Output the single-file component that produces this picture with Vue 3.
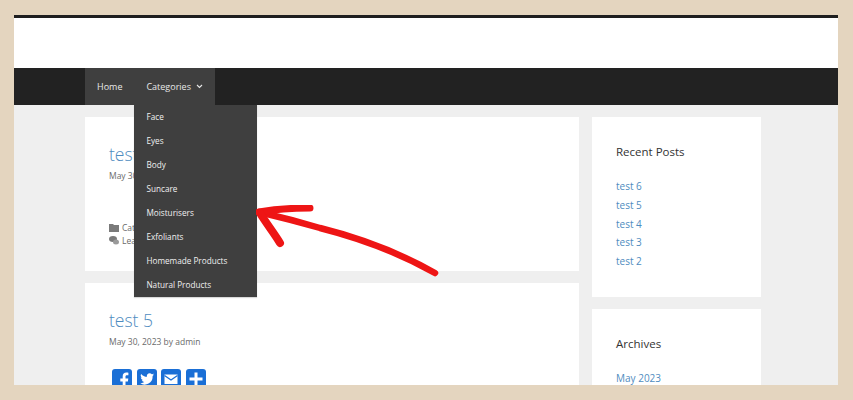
<template>
  <div class="frame">
    <div class="top-line"></div>
    <header class="header"></header>

    <nav class="nav">
      <ul class="menu">
        <li class="item">Home</li>
        <li class="item has-sub">
          Categories
          <svg class="caret" width="7" height="5" viewBox="0 0 7 5">
            <path d="M1 1l2.5 2.5L6 1" fill="none" stroke="#e8e8e8" stroke-width="1.1" />
          </svg>
          <ul class="dropdown">
            <li v-for="c in categorias" :key="c">{{ c }}</li>
          </ul>
        </li>
      </ul>
    </nav>

    <div class="content">
      <main class="posts">
        <article class="card first">
          <h2 class="title">test 6</h2>
          <p class="meta">May 30, 2023 by admin</p>
          <div class="foot">
            <div class="foot-row">
              <svg width="10" height="8" viewBox="0 0 10 8"><path d="M0 0h4l1 1h5v7H0z" fill="#7a7a7a" /></svg>
              Categories
            </div>
            <div class="foot-row">
              <svg width="10" height="9" viewBox="0 0 10 9"><ellipse cx="4" cy="3" rx="4" ry="3" fill="#7a7a7a" /><ellipse cx="7" cy="6" rx="3" ry="2.5" fill="#9a9a9a" /></svg>
              Leave a comment
            </div>
          </div>
        </article>

        <article class="card second">
          <h2 class="title">test 5</h2>
          <p class="meta">May 30, 2023 by admin</p>
          <div class="share">
            <span class="ico">
              <svg viewBox="0 0 20 20"><path d="M13.5 20v-7.6h2.4l.4-2.9h-2.8V7.7c0-.8.3-1.4 1.5-1.4h1.4V3.7c-.3 0-1.1-.1-2.1-.1-2.1 0-3.6 1.3-3.6 3.7v2.2H8.3v2.9h2.4V20z" fill="#fff" /></svg>
            </span>
            <span class="ico">
              <svg viewBox="0 0 20 20"><path d="M17 5.6c-.5.2-1 .4-1.6.5.6-.4 1-.9 1.2-1.6-.5.3-1.1.6-1.8.7a2.8 2.8 0 0 0-4.8 2.6C7.7 7.7 5.6 6.6 4.2 4.9a2.8 2.8 0 0 0 .9 3.8c-.5 0-.9-.1-1.3-.4 0 1.4 1 2.5 2.3 2.8-.4.1-.8.1-1.3 0 .4 1.1 1.4 1.9 2.6 2-1.2.9-2.7 1.3-4.2 1.1a8 8 0 0 0 12.4-7.1c.6-.4 1-.9 1.4-1.5z" fill="#fff" /></svg>
            </span>
            <span class="ico">
              <svg viewBox="0 0 20 20"><path d="M3.5 5.5h13v9.5h-13z" fill="#fff" /><path d="M3.5 6.5L10 11l6.5-4.5" fill="none" stroke="#1a6fd6" stroke-width="1.3" /></svg>
            </span>
            <span class="ico">
              <svg viewBox="0 0 20 20"><path d="M8.5 3.5h3v5h5v3h-5v5h-3v-5h-5v-3h5z" fill="#fff" /></svg>
            </span>
          </div>
        </article>
      </main>

      <aside class="sidebar">
        <section class="widget">
          <h3>Recent Posts</h3>
          <ul>
            <li v-for="p in recentes" :key="p">{{ p }}</li>
          </ul>
        </section>
        <section class="widget">
          <h3>Archives</h3>
          <ul>
            <li>May 2023</li>
          </ul>
        </section>
      </aside>
    </div>

    <!-- seta vermelha por cima da pagina -->
    <svg class="arrow" width="200" height="90" viewBox="0 0 200 90">
      <path d="M179 68C140 46 100 32 64 23 40 16 20 11 3 7" fill="none" stroke="#ee1515" stroke-width="6.5" stroke-linecap="round" />
      <path d="M3 7C20 4 38 3 54 3" fill="none" stroke="#ee1515" stroke-width="7" stroke-linecap="round" />
      <path d="M4 8C10 18 18 28 24 38" fill="none" stroke="#ee1515" stroke-width="8" stroke-linecap="round" />
    </svg>
  </div>
</template>

<script setup>
const categorias = [
  'Face',
  'Eyes',
  'Body',
  'Suncare',
  'Moisturisers',
  'Exfoliants',
  'Homemade Products',
  'Natural Products'
]

const recentes = ['test 6', 'test 5', 'test 4', 'test 3', 'test 2']
</script>

<style>
body {
  background: #e4d5bf;
}
</style>

<style scoped>
.frame {
  position: relative;
  width: 824px;
  height: 370px;
  margin: 15px 0 0 14px;
  overflow: hidden;
  background: #efefef;
  font-family: "Open Sans", "Noto Sans", sans-serif;
  color: #3a3a3a;
}

.top-line {
  height: 3px;
  background: #1f1f1f;
}

.header {
  height: 50px;
  background: #fff;
}

.nav {
  height: 37px;
  padding-left: 71px;
  background: #222;
}

ul {
  margin: 0;
  padding: 0;
  list-style: none;
}

.menu {
  display: inline-flex;
  height: 37px;
  background: #3f3f3f;
  color: #e8e8e8;
  font-size: 9px;
}

.item {
  position: relative;
  display: flex;
  align-items: center;
  padding: 0 12px;
  white-space: nowrap;
}

.has-sub {
  gap: 5px;
}

.dropdown {
  position: absolute;
  top: 37px;
  left: 0;
  z-index: 5;
  width: 123px;
  background: #3f3f3f;
  color: #f0f0f0;
  font-size: 8.2px;
  box-shadow: 0 1px 1px rgba(0, 0, 0, 0.15);
}

.dropdown li {
  height: 24px;
  padding-left: 12px;
  line-height: 24px;
}

.content {
  display: flex;
  gap: 13px;
  padding: 12px 0 0 71px;
}

.posts {
  display: flex;
  flex-direction: column;
  gap: 12px;
  width: 494px;
}

.card {
  box-sizing: border-box;
  padding: 25px 24px 0;
  background: #fff;
}

.first {
  height: 154px;
}

.second {
  height: 200px;
}

.title {
  margin: 0;
  color: #4f8cc0;
  font-size: 17.5px;
  font-weight: 300;
  line-height: 24px;
}

.meta {
  margin: 3px 0 0;
  color: #6a6a6a;
  font-size: 8.5px;
  line-height: 14px;
}

.foot {
  margin-top: 38px;
  color: #6a6a6a;
  font-size: 8.5px;
}

.foot-row {
  display: flex;
  align-items: center;
  gap: 3px;
  height: 13px;
}

.share {
  display: flex;
  gap: 4.5px;
  margin: 20px 0 0 3px;
}

.ico {
  width: 20px;
  height: 20px;
  border-radius: 3px;
  background: #1a6fd6;
}

.ico svg {
  display: block;
}

.sidebar {
  display: flex;
  flex-direction: column;
  gap: 12px;
  width: 169px;
}

.widget {
  box-sizing: border-box;
  flex-shrink: 0;
  height: 180px;
  padding: 26px 24px 0;
  background: #fff;
}

.widget h3 {
  margin: 0 0 16px;
  color: #333;
  font-size: 11.5px;
  font-weight: 400;
  line-height: 18px;
}

.widget li {
  color: #4f8cc0;
  font-size: 10px;
  line-height: 18.8px;
}

.arrow {
  position: absolute;
  top: 190px;
  left: 242px;
  z-index: 6;
}
</style>
